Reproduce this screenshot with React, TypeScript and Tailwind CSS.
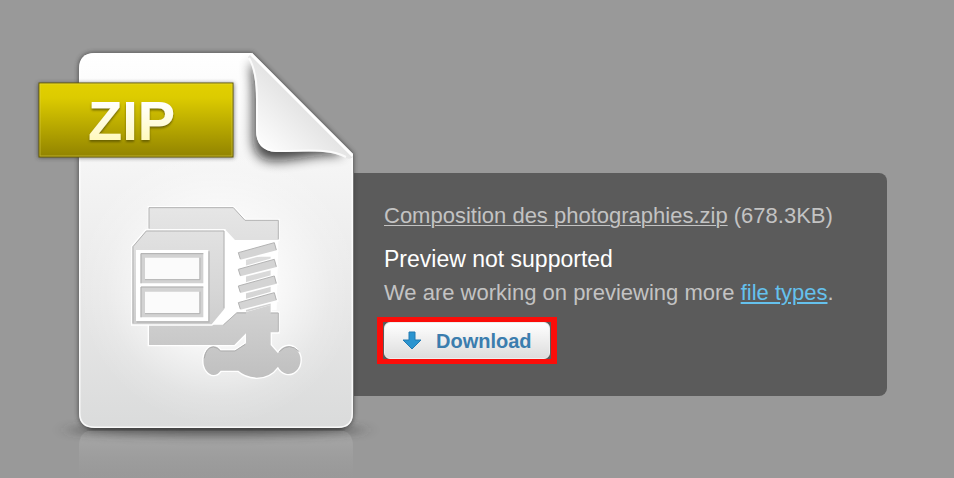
const springOffsets = [0, 50, 100, 150];

function ZipFileArt() {
  return (
    <svg
      role="img"
      aria-label="ZIP file"
      viewBox="0 0 354 478"
      className="relative z-10 w-[354px] shrink-0 overflow-visible"
    >
      <defs>
        <linearGradient id="paper" x1="0" y1="0" x2="0" y2="1">
          <stop offset="0" stopColor="#ffffff" />
          <stop offset="0.3" stopColor="#f5f5f5" />
          <stop offset="0.65" stopColor="#e8e8e8" />
          <stop offset="1" stopColor="#dadbdb" />
        </linearGradient>
        <radialGradient id="glow" gradientUnits="userSpaceOnUse" cx="218" cy="285" r="140">
          <stop offset="0" stopColor="#fff" />
          <stop offset="0.35" stopColor="#fff" stopOpacity="0.85" />
          <stop offset="0.6" stopColor="#fff" stopOpacity="0.45" />
          <stop offset="0.8" stopColor="#fff" stopOpacity="0.15" />
          <stop offset="1" stopColor="#fff" stopOpacity="0" />
        </radialGradient>
        <linearGradient id="curl" gradientUnits="userSpaceOnUse" x1="254" y1="145" x2="304" y2="95">
          <stop offset="0" stopColor="#ffffff" />
          <stop offset="0.35" stopColor="#f4f4f4" />
          <stop offset="1" stopColor="#e0e0e0" />
        </linearGradient>
        <linearGradient id="band" x1="0" y1="0" x2="0" y2="1">
          <stop offset="0" stopColor="#e2d000" />
          <stop offset="0.2" stopColor="#dccb00" />
          <stop offset="1" stopColor="#918300" />
        </linearGradient>
        <linearGradient id="letters" gradientUnits="userSpaceOnUse" x1="0" y1="102" x2="0" y2="140">
          <stop offset="0" stopColor="#ffffff" />
          <stop offset="1" stopColor="#fff9bd" />
        </linearGradient>
        <linearGradient id="clamp" gradientUnits="userSpaceOnUse" x1="0" y1="50" x2="0" y2="560">
          <stop offset="0" stopColor="#e6e6e6" />
          <stop offset="0.5" stopColor="#d6d6d6" />
          <stop offset="1" stopColor="#c0c0c0" />
        </linearGradient>
        <linearGradient id="reflection" x1="0" y1="0" x2="0" y2="1">
          <stop offset="0" stopColor="#b4b4b4" stopOpacity="0.6" />
          <stop offset="1" stopColor="#a2a2a2" stopOpacity="0" />
        </linearGradient>
        <filter id="blurSmall" x="-20%" y="-20%" width="140%" height="140%">
          <feGaussianBlur stdDeviation="2" />
        </filter>
        <filter id="blurCurl" x="-30%" y="-30%" width="160%" height="160%">
          <feGaussianBlur stdDeviation="6" />
        </filter>
        <filter id="blurFloor" x="-20%" y="-200%" width="140%" height="500%">
          <feGaussianBlur stdDeviation="9 4" />
        </filter>
        <filter id="letterShadow">
          <feDropShadow dx="0" dy="2" stdDeviation="1" floodColor="#5b5200" floodOpacity="0.8" />
        </filter>
        <clipPath id="page">
          <path d="M95 53H252L353 154V413Q353 428 338 428H95Q79 428 79 413V69Q79 53 95 53Z" />
        </clipPath>
      </defs>

      {/* floor shadow and reflection */}
      <path d="M79 478V446Q79 430 95 430H337Q353 430 353 446V478Z" fill="url(#reflection)" />
      <ellipse cx="216" cy="430" rx="148" ry="6" fill="#333" opacity="0.6" filter="url(#blurFloor)" />
      <rect x="88" y="426" width="256" height="4" rx="2" fill="#333" opacity="0.7" filter="url(#blurSmall)" />

      {/* page */}
      <path
        d="M95 53H252L353 154V413Q353 428 338 428H95Q79 428 79 413V69Q79 53 95 53Z"
        fill="#333"
        stroke="#333"
        strokeWidth="2"
        opacity="0.6"
        filter="url(#blurSmall)"
      />
      <g clipPath="url(#page)">
        <path d="M79 53H353V428H79Z" fill="url(#paper)" />
        <path d="M79 53H353V428H79Z" fill="url(#glow)" />
        <path
          d="M250 62C253 78 253 90 253 106V134Q252 160 272 161C295 162 315 153 343 155L310 108Z"
          fill="#111"
          opacity="0.75"
          filter="url(#blurCurl)"
        />
        <path
          d="M95 53H252L353 154V413Q353 428 338 428H95Q79 428 79 413V69Q79 53 95 53Z"
          fill="none"
          stroke="#fff"
          strokeWidth="3"
          opacity="0.8"
        />
        <path
          d="M252 53L353 154V157Q350 160 346 158C328 149 310 152 276 152Q256 151 256 130V100C256 82 254 68 248 57Z"
          fill="url(#curl)"
        />
        <path
          d="M346 157C328 148 310 151 276 151Q257 150 257 130V100C257 82 255 68 249 58"
          fill="none"
          stroke="#fff"
          strokeWidth="2"
          opacity="0.8"
        />
        <path d="M251 54L353 156" fill="none" stroke="#fff" strokeWidth="3" />
      </g>

      {/* clamp around a file cabinet */}
      <g transform="translate(120 190) scale(0.3333)">
        <path d="M315 118L345 150H475L470 360H378L350 368L310 408H278L315 350Z" fill="#fff" />
        <g fill="url(#clamp)" stroke="#fff" strokeWidth="8" paintOrder="stroke">
          <path d="M87 52H340L375 90H475V150H345L315 118H87Z" />
          <path d="M87 400H310L350 366H378L452 345V368H475V427H452V465L474 490A36 42 0 1 1 474 530Q450 563 410 563Q375 560 355 542H302A30 43 0 1 1 302 482H345L378 460V430L343 465H87Z" />
        </g>
        <path d="M378 200H452V345L378 365Z" fill="url(#clamp)" />
        <path
          d="M37 170L78 122H313V357L275 403H37Z"
          fill="url(#clamp)"
          stroke="#fff"
          strokeWidth="8"
          paintOrder="stroke"
        />
        <path d="M317 355L277 404H310L352 366V330Z" fill="#fff" />
        {springOffsets.map((y) => (
          <g key={y} transform={`translate(0 ${y})`}>
            <path d="M355 188L463 158L470 181L361 209Z" fill="#d4d4d4" stroke="#fff" strokeWidth="10" paintOrder="stroke" />
            <path d="M361 207L355 188L463 158L469 180" fill="none" stroke="#b3b3b3" strokeWidth="3" />
          </g>
        ))}
        <path
          d="M87 116V53H340L375 91H475V148M39 400V170L79 123H312V355M310 405L350 369H378M452 369H475V425"
          fill="none"
          stroke="#b3b3b3"
          strokeWidth="3"
        />
        <path d="M253 505Q258 472 280 471Q292 472 302 483H345L376 463M478 485Q508 455 538 485" fill="none" stroke="#adadad" strokeWidth="3" />
        <path d="M48 180H265V393H48Z" fill="#fff" />
        <path d="M50 396H267V184" fill="none" stroke="#b8b8b8" strokeWidth="4" />
        <path d="M62 190H250V280H62ZM62 290H250V382H62Z" fill="#d2d2d2" />
        <path d="M63 280V191H250M63 382V291H250" fill="none" stroke="#adadad" strokeWidth="3" />
        <path d="M75 203H238V268H75ZM75 305H238V370H75Z" fill="#fbfbfb" />
        <path d="M75 269H240V203M75 371H240V305" fill="none" stroke="#b4b4b4" strokeWidth="3" />
      </g>

      {/* type band */}
      <rect x="38" y="83" width="196" height="75" fill="#333" opacity="0.6" filter="url(#blurSmall)" />
      <rect x="39" y="83" width="194" height="74" fill="url(#band)" stroke="#625900" />
      <rect x="40" y="84" width="192" height="72" fill="none" stroke="#e4d954" strokeOpacity="0.5" />
      <text
        x="88"
        y="140"
        fontSize="56"
        fontWeight="700"
        fill="url(#letters)"
        filter="url(#letterShadow)"
        className="font-['Liberation_Sans',sans-serif]"
      >
        ZIP
      </text>
    </svg>
  );
}

function DownArrow() {
  return (
    <svg viewBox="0 0 20 20" aria-hidden="true" className="h-5 w-5 shrink-0">
      <path d="M7 1H13V9H19L10 18L1 9H7Z" fill="#2b94cf" stroke="#237bb2" strokeWidth="1" />
    </svg>
  );
}

export default function App() {
  return (
    <main className="flex min-h-screen items-start overflow-hidden bg-[#999999] font-['Liberation_Sans',Arial,sans-serif]">
      <ZipFileArt />

      <section className="mt-[173px] mr-[67px] flex-1 rounded-r-lg bg-[#5b5b5b] pt-[29px] pr-8 pb-8 pl-[30px] text-[22px] leading-7 text-[#c3c3c3]">
        <p className="whitespace-nowrap">
          <a href="#file" className="underline decoration-1 underline-offset-2">
            Composition des photographies.zip
          </a>{" "}
          (678.3KB)
        </p>

        <h1 className="mt-[15px] text-[23px] leading-7 font-normal text-white">Preview not supported</h1>
        <p className="mt-[6px] whitespace-nowrap">
          We are working on previewing more{" "}
          <a href="#types" className="text-[#65c1ed] underline decoration-2 underline-offset-2">
            file types
          </a>
          .
        </p>

        <div className="mt-[10px] -ml-[7px] w-fit border-x-[6px] border-y-[5px] border-[#fb0d09] px-px">
          <button
            type="button"
            className="flex h-[37px] items-center gap-[14px] rounded-md border border-[#eeeeee] bg-linear-to-b from-white to-[#dddddd] px-[17px] text-xl font-bold text-[#3b7dae]"
          >
            <DownArrow />
            Download
          </button>
        </div>
      </section>
    </main>
  );
}
